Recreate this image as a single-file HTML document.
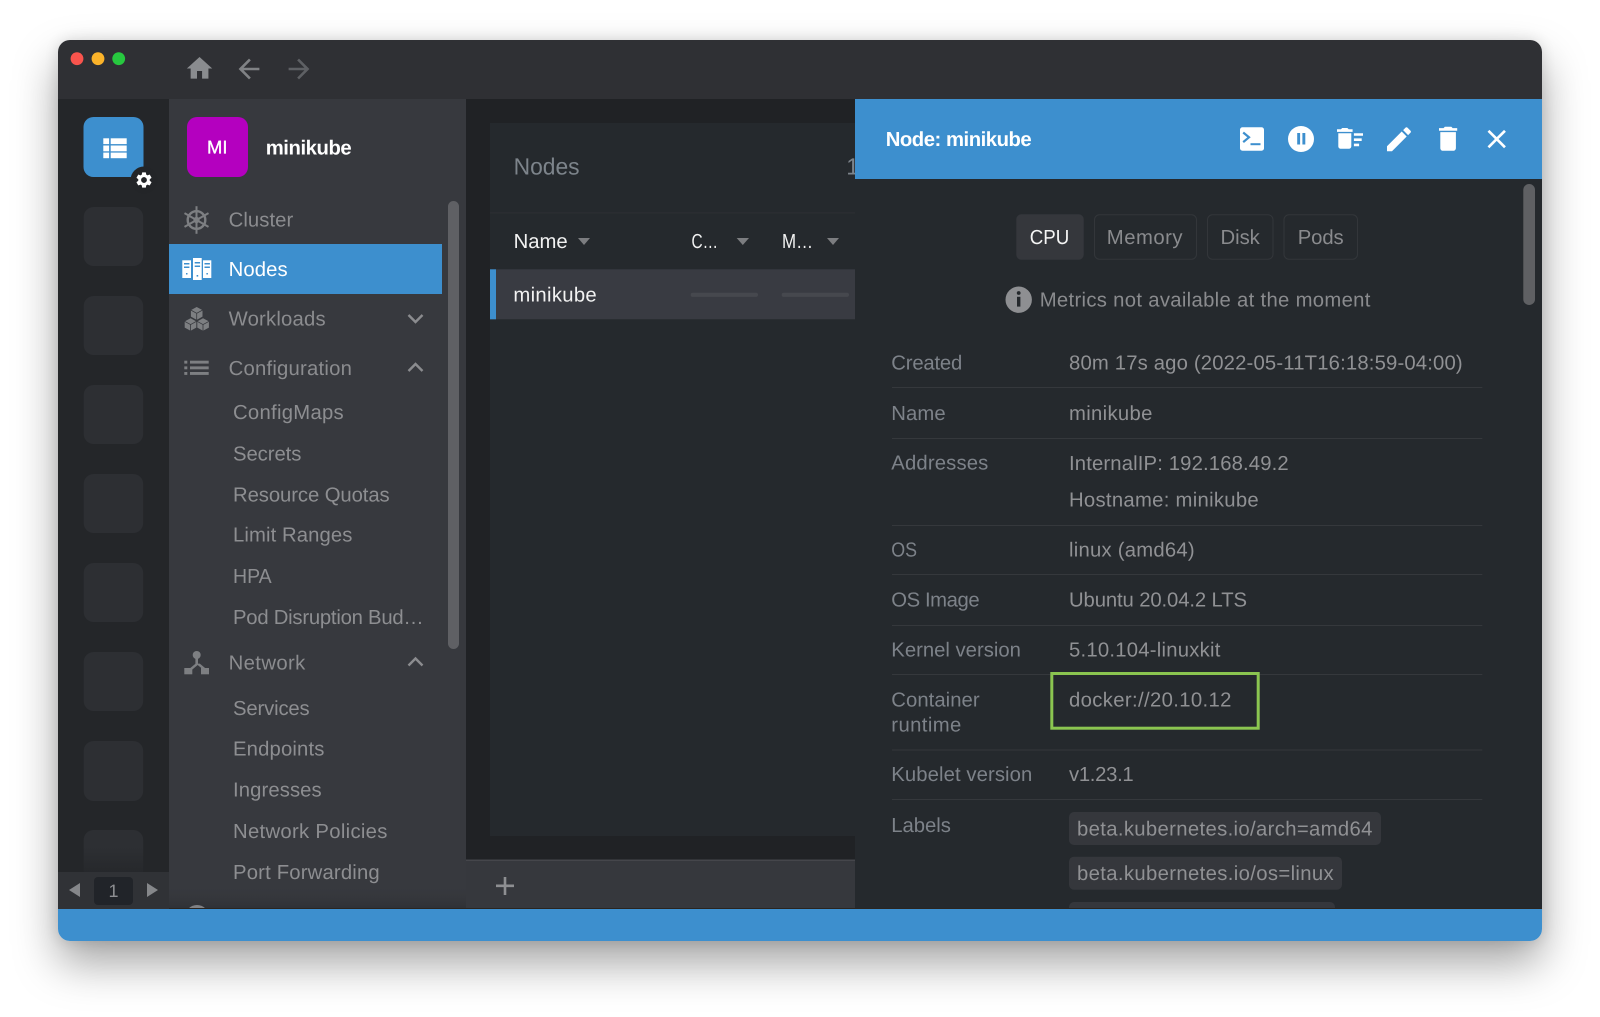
<!DOCTYPE html>
<html lang="en">
<head>
<meta charset="utf-8">
<title>Lens - Node: minikube</title>
<style>
html,body{margin:0;padding:0;width:1600px;height:1017px;overflow:hidden;background:#fff}
#shadow{position:absolute;left:58px;top:40px;width:1484px;height:901px;border-radius:12px;box-shadow:0 22px 44px rgba(0,0,0,.36),0 0 14px rgba(0,0,0,.12)}
svg{position:absolute;left:0;top:0;display:block}
text{font-family:"Liberation Sans",Arial,sans-serif;font-size:20.3px;text-rendering:geometricPrecision}
.nav{fill:#8b8c8f}
.sub{fill:#8d8e91}
.lab{fill:#7d8289}
.val{fill:#909194}
.tab{fill:#8a8b8e}
.wht{fill:#f2f2f2}
.b{font-weight:700;fill:#fff}
</style>
</head>
<body>
<div id="shadow"></div>
<svg width="1600" height="1017" viewBox="0 0 1600 1017" xmlns="http://www.w3.org/2000/svg">
<defs>
<clipPath id="win"><rect x="58" y="40" width="1484" height="901" rx="12"/></clipPath>
<clipPath id="menuclip"><rect x="169" y="99" width="297" height="810"/></clipPath>
<clipPath id="detclip"><rect x="855" y="179" width="687" height="730"/></clipPath>
<linearGradient id="tilefade" x1="0" y1="0" x2="0" y2="1"><stop offset="0" stop-color="#2d2f33"/><stop offset=".35" stop-color="#2d2f33"/><stop offset="1" stop-color="#242629"/></linearGradient>
<linearGradient id="menufade" x1="0" y1="0" x2="0" y2="1"><stop offset="0" stop-color="#37393e" stop-opacity="0"/><stop offset="1" stop-color="#2f3135"/></linearGradient>
</defs>
<g clip-path="url(#win)">
  <!-- title bar -->
  <rect x="58" y="40" width="1484" height="59" fill="#2f3034"/>
  <circle cx="77" cy="58.7" r="6.4" fill="#f9544d"/>
  <circle cx="98" cy="58.7" r="6.4" fill="#fbb32a"/>
  <circle cx="118.7" cy="58.7" r="6.4" fill="#27c83f"/>
  <path transform="translate(184.3 53.2) scale(1.27)" d="M10 20v-6h4v6h5v-8h3L12 3 2 12h3v8z" fill="#8a8c8f"/>
  <path transform="translate(233.4 53.4) scale(1.3)" d="M20 11H7.83l5.59-5.59L12 4l-8 8 8 8 1.41-1.41L7.83 13H20v-2z" fill="#808285"/>
  <path transform="translate(283.4 53.4) scale(1.3)" d="M12 4l-1.41 1.41L16.17 11H4v2h12.17l-5.58 5.59L12 20l8-8z" fill="#5e6064"/>

  <!-- left strip -->
  <rect x="58" y="99" width="111" height="810" fill="#242629"/>
  <rect x="83.5" y="117" width="60" height="60" rx="10" fill="#3d8fce"/>
  <g fill="#fff">
    <rect x="103.3" y="138.3" width="5.8" height="5.8"/><rect x="110.7" y="138.3" width="16" height="5.8"/>
    <rect x="103.3" y="145.5" width="5.8" height="5.8"/><rect x="110.7" y="145.5" width="16" height="5.8"/>
    <rect x="103.3" y="152.6" width="5.8" height="5.6"/><rect x="110.7" y="152.6" width="16" height="5.6"/>
  </g>
  <circle cx="144" cy="180" r="13.5" fill="#232528"/>
  <path transform="translate(134.4 170.4) scale(.8)" d="M19.14 12.94c.04-.3.06-.61.06-.94 0-.32-.02-.64-.07-.94l2.03-1.58a.49.49 0 0 0 .12-.61l-1.92-3.32a.488.488 0 0 0-.59-.22l-2.39.96c-.5-.38-1.03-.7-1.62-.94l-.36-2.54a.484.484 0 0 0-.48-.41h-3.84c-.24 0-.43.17-.47.41l-.36 2.54c-.59.24-1.13.57-1.62.94l-2.39-.96c-.22-.08-.47 0-.59.22L2.74 8.87c-.12.21-.08.47.12.61l2.03 1.58c-.05.3-.09.63-.09.94s.02.64.07.94l-2.03 1.58a.49.49 0 0 0-.12.61l1.92 3.32c.12.22.37.29.59.22l2.39-.96c.5.38 1.03.7 1.62.94l.36 2.54c.05.24.24.41.48.41h3.84c.24 0 .44-.17.47-.41l.36-2.54c.59-.24 1.13-.56 1.62-.94l2.39.96c.22.08.47 0 .59-.22l1.92-3.32c.12-.22.07-.47-.12-.61l-2.01-1.58zM12 15.6c-1.98 0-3.6-1.62-3.6-3.6s1.62-3.6 3.6-3.6 3.6 1.62 3.6 3.6-1.62 3.6-3.6 3.6z" fill="#fff"/>
  <g fill="#2d2f33">
    <rect x="83.7" y="207" width="59.5" height="59" rx="10"/>
    <rect x="83.7" y="296" width="59.5" height="59" rx="10"/>
    <rect x="83.7" y="385" width="59.5" height="59" rx="10"/>
    <rect x="83.7" y="474" width="59.5" height="59" rx="10"/>
    <rect x="83.7" y="563" width="59.5" height="59" rx="10"/>
    <rect x="83.7" y="652" width="59.5" height="59" rx="10"/>
    <rect x="83.7" y="741" width="59.5" height="60" rx="10"/>
  </g>
  <rect x="83.7" y="830" width="59.5" height="50" rx="10" fill="url(#tilefade)"/>
  <rect x="58" y="872" width="111" height="37" fill="#303236"/>
  <polygon points="80,883 80,897 69,890" fill="#85878a"/>
  <rect x="94" y="877" width="39" height="28" rx="4" fill="#212429"/>
  <text x="113.5" y="897" text-anchor="middle" style="font-size:18px" fill="#8d8e91">1</text>
  <polygon points="147,883 147,897 158,890" fill="#85878a"/>

  <!-- menu -->
  <rect x="169" y="99" width="297" height="810" fill="#37393e"/>
  <rect x="187" y="117" width="61" height="60" rx="10" fill="#b400bf"/>
  <text x="207" y="153.6" textLength="20.5" lengthAdjust="spacingAndGlyphs" class="b" style="font-size:18.5px;font-weight:400;stroke:#fff;stroke-width:.35">MI</text>
  <text x="265.7" y="154.3" textLength="86" class="b">minikube</text>

  <!-- wheel -->
  <g fill="none" stroke="#7d7f82">
    <circle cx="196.5" cy="220" r="8.8" stroke-width="2.4"/>
    <circle cx="196.5" cy="220" r="2.2" stroke-width="1.8"/>
    <g stroke-width="2">
      <line x1="196.5" y1="206.2" x2="196.5" y2="233.8"/>
      <line x1="184.5" y1="213.1" x2="208.5" y2="226.9"/>
      <line x1="184.5" y1="226.9" x2="208.5" y2="213.1"/>
    </g>
  </g>
  <text x="228.6" y="226.5" textLength="64.7" class="nav">Cluster</text>

  <!-- nodes active -->
  <rect x="169" y="244" width="273" height="50" fill="#3d8fce"/>
  <g fill="#fff">
    <rect x="182.3" y="260.3" width="8.7" height="17.7"/>
    <rect x="193" y="258" width="8.7" height="22"/>
    <rect x="203" y="260.3" width="8.3" height="17.7"/>
  </g>
  <g fill="#3d8fce">
    <rect x="184" y="263" width="5.4" height="1.5"/><rect x="184" y="266.5" width="5.4" height="1.5"/><rect x="186" y="273" width="1.5" height="1.5"/>
    <rect x="194.7" y="262" width="5.4" height="1.5"/><rect x="194.7" y="265.5" width="5.4" height="1.5"/><rect x="196.6" y="275" width="1.6" height="1.6"/>
    <rect x="204.5" y="263" width="5.4" height="1.5"/><rect x="204.5" y="266.5" width="5.4" height="1.5"/><rect x="206.4" y="273" width="1.5" height="1.5"/>
  </g>
  <text x="228.6" y="276.2" textLength="59" fill="#fff">Nodes</text>

  <!-- workloads -->
  <g fill="#7d7f82" stroke="#37393e" stroke-width=".8">
    <path d="M196.7 306.5l6.2 3.4v7l-6.2 3.4-6.2-3.4v-7z"/>
    <path d="M190.6 317.8l6.1 3.4v6.6l-6.1 3.4-6.3-3.4v-6.6z"/>
    <path d="M203 317.8l6.3 3.4v6.6l-6.3 3.4-6.1-3.4v-6.6z"/>
    <path d="M190.5 309.9l6.2 3.4 6.2-3.4M184.3 321.2l6.3 3.4 6.1-3.4M196.9 321.2l6.1 3.4 6.3-3.4M196.7 313.3v7M190.6 324.6v6.6M203 324.6v6.6" fill="none"/>
  </g>
  <text x="228.6" y="325.3" textLength="97" class="nav">Workloads</text>
  <polyline points="408.5,315 415.5,322 422.5,315" fill="none" stroke="#8b8c8f" stroke-width="2.4"/>

  <!-- configuration -->
  <g fill="#7d7f82">
    <rect x="184.3" y="360.7" width="3" height="2.9"/><rect x="184.3" y="366.4" width="3" height="2.9"/><rect x="184.3" y="372" width="3" height="2.9"/>
    <rect x="190" y="360.7" width="18.7" height="2.9"/><rect x="190" y="366.4" width="18.7" height="2.9"/><rect x="190" y="372" width="18.7" height="2.9"/>
  </g>
  <text x="228.6" y="375" textLength="123.3" class="nav">Configuration</text>
  <polyline points="408.5,371 415.5,364 422.5,371" fill="none" stroke="#8b8c8f" stroke-width="2.4"/>
  <text x="233" y="419" textLength="110.7" class="sub">ConfigMaps</text>
  <text x="233" y="460.7" textLength="68.4" class="sub">Secrets</text>
  <text x="233" y="501.7" textLength="156.7" class="sub">Resource Quotas</text>
  <text x="233" y="541.7" textLength="119.4" class="sub">Limit Ranges</text>
  <text x="233" y="583" textLength="38.7" lengthAdjust="spacingAndGlyphs" class="sub">HPA</text>
  <text x="233" y="624" textLength="190.7" class="sub">Pod Disruption Bud…</text>

  <!-- network -->
  <g fill="#7d7f82">
    <circle cx="196.7" cy="655" r="4"/>
    <rect x="195.4" y="657" width="2.6" height="8"/>
    <path d="M195.6 663.6l-7.4 6.2 1.6 1.8 7.9-6.6 7.9 6.6 1.6-1.8-7.4-6.2z"/>
    <rect x="184.3" y="668" width="8" height="6.3"/>
    <rect x="201" y="668" width="8" height="6.3"/>
  </g>
  <text x="228.6" y="669.7" textLength="76.7" class="nav">Network</text>
  <polyline points="408.5,665.5 415.5,658.5 422.5,665.5" fill="none" stroke="#8b8c8f" stroke-width="2.4"/>
  <text x="233" y="715.2" textLength="76.7" class="sub">Services</text>
  <text x="233" y="755.5" textLength="91.4" class="sub">Endpoints</text>
  <text x="233" y="796.7" textLength="88.7" class="sub">Ingresses</text>
  <text x="233" y="838" textLength="154.4" class="sub">Network Policies</text>
  <text x="233" y="879" textLength="146.7" class="sub">Port Forwarding</text>

  <rect x="169" y="885" width="297" height="24" fill="url(#menufade)"/>
  <g clip-path="url(#menuclip)"><ellipse cx="197" cy="917" rx="12" ry="12" fill="#808184"/></g>
  <rect x="448" y="201" width="11" height="448" rx="5.5" fill="#5f6064"/>

  <!-- center -->
  <rect x="466" y="99" width="389" height="761" fill="#202225"/>
  <rect x="490" y="123" width="365" height="713" fill="#25292d"/>
  <rect x="490" y="212.4" width="365" height="1" fill="#2d3034"/>
  <text x="513.6" y="174.6" textLength="66" lengthAdjust="spacingAndGlyphs" style="font-size:23.4px" fill="#7d848b">Nodes</text>
  <text x="846.2" y="174.6" style="font-size:23.4px" fill="#7d848b">1</text>
  <text x="513.6" y="248" textLength="54" class="wht">Name</text>
  <polygon points="578,238 590,238 584,245" fill="#7c7d80"/>
  <text x="691.5" y="248" textLength="26.5" lengthAdjust="spacingAndGlyphs" class="wht">C…</text>
  <polygon points="736.7,238 749,238 742.8,245" fill="#7c7d80"/>
  <text x="782" y="248" textLength="31" lengthAdjust="spacingAndGlyphs" class="wht">M…</text>
  <polygon points="827,238 839,238 833,245" fill="#7c7d80"/>
  <rect x="490" y="269.3" width="365" height="50" fill="#393b42"/>
  <rect x="490" y="269.3" width="6" height="50" fill="#3d8fce"/>
  <text x="513.4" y="301.7" textLength="83.3" class="wht">minikube</text>
  <rect x="690.7" y="292.7" width="67.3" height="4.2" rx="2" fill="#46484e"/>
  <rect x="781.7" y="292.7" width="67.3" height="4.2" rx="2" fill="#46484e"/>

  <!-- bottom dock -->
  <rect x="466" y="860" width="389" height="49" fill="#36383d"/>
  <rect x="466" y="859.6" width="389" height="1" fill="#4f5155"/>
  <path d="M505 877v18M496 885.8h18" stroke="#8e8f92" stroke-width="2.6" fill="none"/>

  <!-- details panel -->
  <rect x="855" y="179" width="687" height="730" fill="#25292d"/>
  <rect x="855" y="99" width="687" height="80" fill="#3d8fce"/>
  <text x="885.7" y="146" textLength="146" class="b">Node: minikube</text>

  <rect x="1240" y="127.3" width="24" height="23.4" rx="2.5" fill="#fff"/>
  <path d="M1243.2 132.5l5.8 4.8-5.8 4.8" fill="none" stroke="#3d8fce" stroke-width="2.2"/>
  <rect x="1250.5" y="143.2" width="10" height="2" fill="#3d8fce"/>

  <circle cx="1301" cy="139" r="13" fill="#fff"/>
  <rect x="1297.2" y="133" width="2.9" height="11.5" fill="#3d8fce"/>
  <rect x="1302.4" y="133" width="2.9" height="11.5" fill="#3d8fce"/>

  <path transform="translate(1334.4 122.8) scale(1.3)" d="M15 16h4v2h-4zm0-8h7v2h-7zm0 4h6v2h-6zM3 18c0 1.1.9 2 2 2h6c1.1 0 2-.9 2-2V8H3v10zM14 5h-3l-1-1H6L5 5H2v2h12z" fill="#fff"/>
  <path transform="translate(1383 123.3) scale(1.33)" d="M3 17.25V21h3.75L17.81 9.94l-3.75-3.75L3 17.25zM20.71 7.04c.39-.39.39-1.02 0-1.41l-2.34-2.34c-.39-.39-1.02-.39-1.41 0l-1.83 1.83 3.75 3.75 1.83-1.83z" fill="#fff"/>
  <path transform="translate(1432.5 122.8) scale(1.3 1.33)" d="M6 19c0 1.1.9 2 2 2h8c1.1 0 2-.9 2-2V7H6v12zM19 4h-3.5l-1-1h-5l-1 1H5v2h14V4z" fill="#fff"/>
  <path transform="translate(1481 123.3) scale(1.31)" d="M19 6.41L17.59 5 12 10.59 6.41 5 5 6.41 10.59 12 5 17.59 6.41 19 12 13.41 17.59 19 19 17.59 13.41 12z" fill="#fff"/>

  <rect x="1016.3" y="214.3" width="67.4" height="45.4" rx="5" fill="#35373c"/>
  <text x="1029.8" y="243.9" textLength="39.5" lengthAdjust="spacingAndGlyphs" fill="#f5f5f5">CPU</text>
  <rect x="1094.5" y="214.8" width="102" height="44.4" rx="5" fill="none" stroke="#33363a"/>
  <text x="1106.8" y="243.9" textLength="75.7" class="tab">Memory</text>
  <rect x="1207.5" y="214.8" width="65.5" height="44.4" rx="5" fill="none" stroke="#33363a"/>
  <text x="1220.5" y="243.9" textLength="39.3" class="tab">Disk</text>
  <rect x="1284" y="214.8" width="73.5" height="44.4" rx="5" fill="none" stroke="#33363a"/>
  <text x="1297.7" y="243.9" textLength="46" class="tab">Pods</text>

  <circle cx="1018.7" cy="299.7" r="13.2" fill="#8e8f92"/>
  <circle cx="1018.7" cy="293" r="1.9" fill="#25292d"/>
  <rect x="1017" y="296.8" width="3.4" height="9.8" fill="#25292d"/>
  <text x="1039.7" y="306.7" textLength="330.7" class="tab">Metrics not available at the moment</text>

  <g fill="#35383c">
    <rect x="892" y="387" width="590.3" height="1"/>
    <rect x="892" y="438" width="590.3" height="1"/>
    <rect x="892" y="525" width="590.3" height="1"/>
    <rect x="892" y="574" width="590.3" height="1"/>
    <rect x="892" y="625" width="590.3" height="1"/>
    <rect x="892" y="674" width="590.3" height="1"/>
    <rect x="892" y="749.5" width="590.3" height="1"/>
    <rect x="892" y="799" width="590.3" height="1"/>
  </g>

  <text x="891.3" y="369.3" textLength="71" class="lab">Created</text>
  <text x="1069" y="369.3" textLength="393.7" class="val">80m 17s ago (2022-05-11T16:18:59-04:00)</text>
  <text x="891.3" y="420" textLength="54.3" class="lab">Name</text>
  <text x="1069" y="420" textLength="83.4" class="val">minikube</text>
  <text x="891.3" y="469.7" textLength="97" class="lab">Addresses</text>
  <text x="1069" y="469.8" textLength="219.7" class="val">InternalIP: 192.168.49.2</text>
  <text x="1069" y="506.7" textLength="189.7" class="val">Hostname: minikube</text>
  <text x="891.3" y="556.7" textLength="25.8" lengthAdjust="spacingAndGlyphs" class="lab">OS</text>
  <text x="1069" y="556.7" textLength="125.7" class="val">linux (amd64)</text>
  <text x="891.3" y="606.7" textLength="88.3" class="lab">OS Image</text>
  <text x="1069" y="606.7" textLength="178" class="val">Ubuntu 20.04.2 LTS</text>
  <text x="891.3" y="656.7" textLength="129.6" class="lab">Kernel version</text>
  <text x="1069" y="656.7" textLength="151.4" class="val">5.10.104-linuxkit</text>
  <text x="891.3" y="706.7" textLength="88.3" class="lab">Container</text>
  <text x="891.3" y="731.7" textLength="70" class="lab">runtime</text>
  <text x="1069" y="706.7" textLength="162.4" class="val">docker://20.10.12</text>
  <rect x="1051.8" y="673.5" width="206.4" height="54.7" fill="none" stroke="#8bc550" stroke-width="3"/>
  <text x="891.3" y="781" textLength="141" class="lab">Kubelet version</text>
  <text x="1069" y="781" textLength="64.7" class="val">v1.23.1</text>
  <text x="891.3" y="832" textLength="59.6" class="lab">Labels</text>

  <rect x="1069" y="812" width="312" height="33" rx="5" fill="#35373c"/>
  <text x="1077" y="835.7" textLength="295.4" class="val">beta.kubernetes.io/arch=amd64</text>
  <rect x="1069" y="856.7" width="273" height="33" rx="5" fill="#35373c"/>
  <text x="1077" y="880" textLength="256.7" class="val">beta.kubernetes.io/os=linux</text>
  <g clip-path="url(#detclip)"><rect x="1069" y="902" width="266" height="33" rx="5" fill="#35373c"/></g>

  <rect x="1523.3" y="184" width="11.7" height="121" rx="5.8" fill="#5f6063"/>

  <!-- status bar -->
  <rect x="169" y="908" width="1373" height="1" fill="#2a2520"/>
  <rect x="58" y="909" width="1484" height="32" fill="#3d8fce"/>
</g>
</svg>
</body>
</html>
